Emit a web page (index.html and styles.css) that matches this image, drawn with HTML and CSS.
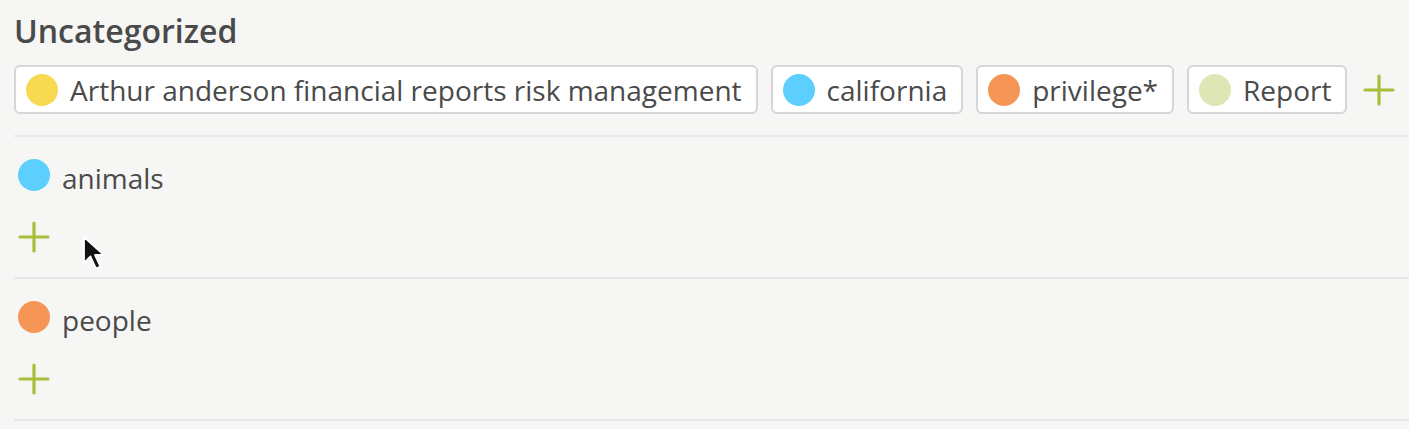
FILE: index.html
```html
<!DOCTYPE html>
<html lang="en">
<head>
  <meta charset="UTF-8">
  <meta name="viewport" content="width=device-width, initial-scale=1.0">
  <title>Tags</title>
  <link rel="stylesheet" href="styles.css">
</head>
<body>
  <div class="group">
    <h2 class="group-title">Uncategorized</h2>
    <div class="tag-row">
      <span class="tag"><span class="dot dot-yellow"></span>Arthur anderson financial reports risk management</span>
      <span class="tag"><span class="dot dot-blue"></span>california</span>
      <span class="tag"><span class="dot dot-orange"></span>privilege*</span>
      <span class="tag"><span class="dot dot-green"></span>Report</span>
      <button class="add-btn" type="button" aria-label="Add tag">
        <svg width="32" height="32" viewBox="0 0 32 32"><path d="M16 2v28M2 16h28" stroke="#a9be3b" stroke-width="3.2" stroke-linecap="round"/></svg>
      </button>
    </div>
  </div>

  <div class="group category">
    <div class="category-name"><span class="dot dot-blue"></span><span class="label">animals</span></div>
    <button class="add-btn" type="button" aria-label="Add tag">
      <svg width="32" height="32" viewBox="0 0 32 32"><path d="M16 2v28M2 16h28" stroke="#a9be3b" stroke-width="3.2" stroke-linecap="round"/></svg>
    </button>
    <!-- mouse pointer from the screenshot -->
    <svg class="pointer" width="24" height="36" viewBox="0 0 24 36">
      <path d="M2 2v26l6.5-6.5 5.5 12 4.5-2-5.5-11.5h9z" fill="#111" stroke="#fff" stroke-width="1.8" stroke-linejoin="round"/>
    </svg>
  </div>

  <div class="group category">
    <div class="category-name"><span class="dot dot-orange"></span><span class="label">people</span></div>
    <button class="add-btn" type="button" aria-label="Add tag">
      <svg width="32" height="32" viewBox="0 0 32 32"><path d="M16 2v28M2 16h28" stroke="#a9be3b" stroke-width="3.2" stroke-linecap="round"/></svg>
    </button>
  </div>
</body>
</html>
```

FILE: styles.css
```css
body {
  margin: 0;
  background-color: #f6f6f4;
  font-family: "Open Sans", Arial, sans-serif;
  color: #4a4a4a;
}

.group {
  margin-left: 14px;
  border-bottom: 2px solid #e8e8eb;
}

.group-title {
  margin: 0;
  padding-top: 11px;
  font-size: 32px;
  font-weight: 600;
  line-height: 40px;
}

.tag-row {
  display: flex;
  align-items: center;
  gap: 13px;
  padding: 14px 0 21px;
}

.tag {
  display: flex;
  align-items: center;
  gap: 12px;
  height: 45px;
  padding: 0 14px 0 10px;
  background-color: #fff;
  border: 2px solid #d6d6d6;
  border-radius: 6px;
  font-size: 28px;
  white-space: nowrap;
}

.dot {
  flex: none;
  width: 32px;
  height: 32px;
  border-radius: 50%;
}

.dot-yellow { background-color: #f7da52; }
.dot-blue { background-color: #5dcfff; }
.dot-orange { background-color: #f59657; }
.dot-green { background-color: #dfe6b6; }

.add-btn {
  display: block;
  padding: 0;
  border: none;
  background: none;
  cursor: pointer;
}

.add-btn svg {
  display: block;
}

.tag-row .add-btn {
  margin-left: 3px;
}

.category {
  position: relative;
  padding: 22px 0 24px 4px;
}

.category-name {
  display: flex;
  align-items: flex-start;
  gap: 12px;
  font-size: 28px;
  line-height: 32px;
}

.category-name .label {
  margin-top: 3px;
}

.category .add-btn {
  margin-top: 27px;
}

.pointer {
  position: absolute;
  left: 68px;
  top: 98px;
}
```
